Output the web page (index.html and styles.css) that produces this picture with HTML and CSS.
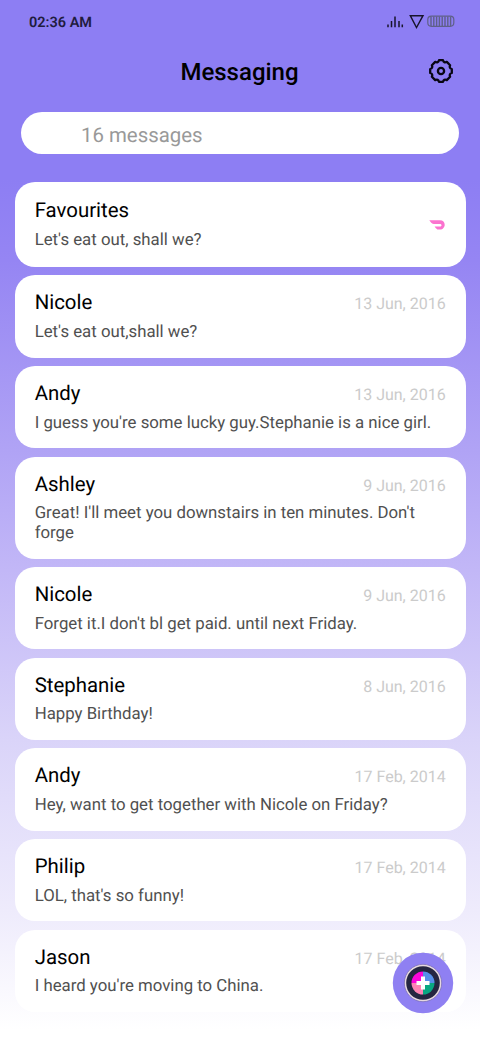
FILE: index.html
```html
<!DOCTYPE html>
<html lang="en">
<head>
<meta charset="utf-8">
<title>Messaging</title>
<link rel="stylesheet" href="styles.css">
</head>
<body>
<div class="screen">
  <div class="status">
    <span>02:36 AM</span>
    <svg class="indicators" width="68" height="16" viewBox="0 0 68 16" fill="none">
      <path d="M1 9.5V12.2M4.5 6V12.2M8 1.5V12.2M12 6V12.2M15.3 9.5V12.2" stroke="#17142b" stroke-width="1.5"/>
      <path d="M23.3 .7H36L29.5 12.5Z" stroke="#17142b" stroke-width="1.4"/>
      <rect x="40.8" y="1.1" width="26" height="10.2" rx="3.5" stroke="#5f6088" stroke-width="1.2"/>
      <path d="M44 1.5V11M46.8 1.5V11M49.6 1.5V11M52.4 1.5V11M55.2 1.5V11M58 1.5V11M60.8 1.5V11M63.6 1.5V11" stroke="#5f6088" stroke-width="1.4"/>
    </svg>
  </div>
  <header class="header">
    <h1>Messaging</h1>
    <svg class="gear" width="26" height="26" viewBox="0 0 26 26" fill="none" stroke="#080612" stroke-width="2.3" stroke-linejoin="round">
      <path d="M11 2.2H15Q15.8 5.2 18.8 3.9L22.1 7.2Q20.8 10.2 23.8 11V15Q20.8 15.8 22.1 18.8L18.8 22.1Q15.8 20.8 15 23.8H11Q10.2 20.8 7.2 22.1L3.9 18.8Q5.2 15.8 2.2 15V11Q5.2 10.2 3.9 7.2L7.2 3.9Q10.2 5.2 11 2.2Z"/>
      <circle cx="13" cy="13" r="3.1"/>
    </svg>
  </header>
  <div class="search">16 messages</div>
  <main class="list">
    <section class="card favourites">
      <div><h2>Favourites</h2><p>Let's eat out, shall we?</p></div>
      <svg class="dash" width="16" height="10" viewBox="0 0 16 10"><path fill="#fb72cf" d="M.3 .3H11C14 .3 15.7 2.3 15.7 4.8S13.8 9.6 11.2 9.6H9.2C8 9.6 7.2 8.7 5.6 6.5H11C13 6.5 13 4 11 4H4.7C3.5 4 2.7 3.4 2 2.6Z"/></svg>
    </section>
    <section class="card"><div class="row"><h2>Nicole</h2><time>13 Jun, 2016</time></div><p>Let's eat out,shall we?</p></section>
    <section class="card"><div class="row"><h2>Andy</h2><time>13 Jun, 2016</time></div><p>I guess you're some lucky guy.Stephanie is a nice girl.</p></section>
    <section class="card"><div class="row"><h2>Ashley</h2><time>9 Jun, 2016</time></div><p>Great! I'll meet you downstairs in ten minutes. Don't<br>forge</p></section>
    <section class="card"><div class="row"><h2>Nicole</h2><time>9 Jun, 2016</time></div><p>Forget it.I don't bl get paid. until next Friday.</p></section>
    <section class="card"><div class="row"><h2>Stephanie</h2><time>8 Jun, 2016</time></div><p>Happy Birthday!</p></section>
    <section class="card"><div class="row"><h2>Andy</h2><time>17 Feb, 2014</time></div><p>Hey, want to get together with Nicole on Friday?</p></section>
    <section class="card"><div class="row"><h2>Philip</h2><time>17 Feb, 2014</time></div><p>LOL, that's so funny!</p></section>
    <section class="card"><div class="row"><h2>Jason</h2><time>17 Feb, 2014</time></div><p>I heard you're moving to China.</p></section>
  </main>
  <svg class="fab" width="62" height="62" viewBox="0 0 62 62">
    <circle cx="31" cy="31" r="30.2" fill="#8f80f2"/>
    <circle cx="31" cy="31" r="18.7" fill="#e6d8df" stroke="#7469b6" stroke-width=".7"/>
    <circle cx="31" cy="31" r="16.8" fill="#252641"/>
    <path d="M31 31V19.5A11.5 11.5 0 0 0 19.5 31Z" fill="#fb05da"/>
    <path d="M31 31V19.5A11.5 11.5 0 0 1 42.5 31Z" fill="#5790ea"/>
    <path d="M31 31H19.5A11.5 11.5 0 0 0 31 42.5Z" fill="#ff83b5"/>
    <path d="M31 31H42.5A11.5 11.5 0 0 1 31 42.5Z" fill="#08a782"/>
    <path d="M29 24.5H33V29H37.5V33H33V37.5H29V33H24.5V29H29Z" fill="#fff"/>
  </svg>
</div>
</body>
</html>
```
FILE: styles.css
```css
body {
  margin: 0;
  font-family: Roboto, sans-serif;
  text-rendering: geometricPrecision;
}

.screen {
  box-sizing: border-box;
  position: relative;
  height: 1040px;
  overflow: hidden;
  background: linear-gradient(#8d7ef3 0, #8d7ef3 180px, #9585f3 260px, #b0a3f5 450px, #c2b7f7 570px, #dad4f9 740px, #eeebfc 910px, #fff 1030px);
}

.status {
  display: flex;
  justify-content: space-between;
  padding: 15px 25px 0 29px;
  height: 30px;
  font-size: 14.5px;
  line-height: 16px;
  font-weight: 600;
  color: #211c3e;
}

.header {
  display: grid;
  grid-template-columns: 1fr auto 1fr;
  align-items: center;
  height: 52px;
  padding: 0 26px 0 25px;
}

h1 {
  grid-column: 2;
  margin: 2px 0 0;
  font-size: 24px;
  line-height: 28px;
  font-weight: 500;
  color: #000;
}

.gear {
  justify-self: end;
}

.search {
  box-sizing: border-box;
  height: 42px;
  margin: 15.4px 21px 27.6px;
  padding: 2px 60px 0;
  border-radius: 21px;
  background: #fff;
  color: #999;
  font-size: 20.4px;
  line-height: 42px;
}

.list {
  display: flex;
  flex-direction: column;
  gap: 8.3px;
  margin: 0 14.3px 0 14.7px;
}

.card {
  box-sizing: border-box;
  min-height: 82.4px;
  padding: 15px 20px 14.6px;
  border-radius: 20px;
  background: #fff;
}

.row {
  display: flex;
  justify-content: space-between;
}

h2 {
  margin: 0;
  font-size: 20.4px;
  line-height: 24px;
  font-weight: 400;
  color: #000;
}

time {
  padding-top: 2px;
  font-size: 16px;
  line-height: 24px;
  color: #cbcbcb;
}

.card p {
  margin: 8.7px 0 0;
  font-size: 16.8px;
  line-height: 19.8px;
  color: #505050;
  white-space: nowrap;
}

.row + p {
  margin-top: 6.8px;
}

.favourites {
  display: flex;
  justify-content: space-between;
  min-height: 85px;
  padding-top: 16px;
}

.dash {
  margin: 22px 1px 0 0;
}

.fab {
  position: absolute;
  left: 391.7px;
  top: 951.7px;
}
```
